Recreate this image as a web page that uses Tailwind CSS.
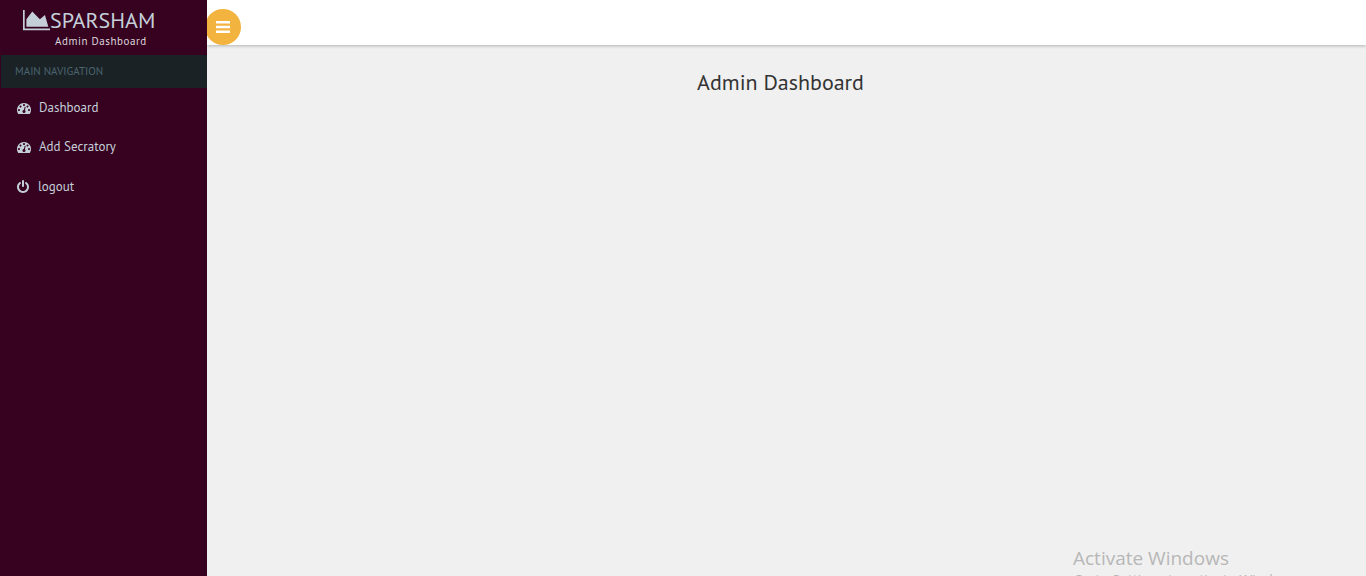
<!DOCTYPE html>
<html lang="en">
<head>
<meta charset="utf-8">
<meta name="viewport" content="width=device-width, initial-scale=1">
<title>Admin Dashboard</title>
<script src="https://cdn.jsdelivr.net/npm/@tailwindcss/browser@4"></script>
</head>
<body class="flex h-screen overflow-hidden bg-[#f0f0f0] font-['PT_Sans','Noto_Sans',sans-serif]">
<aside class="w-[207px] shrink-0 bg-[#360220] text-[#c5cfd8]">
  <a href="#" class="flex h-[55px] flex-col pt-2 pl-[23px]">
    <span class="flex h-6 items-center text-[22px] leading-[22px]">
      <svg class="h-6 w-[27px] shrink-0" viewBox="0 0 2048 1792" fill="currentColor" aria-hidden="true"><path d="M2048 1536v128h-2048v-1536h128v1408h1920zm-384-1024l256 896h-1664v-576l448-576 576 576z"/></svg>SPARSHAM</span>
    <span class="pl-8 text-[11px] leading-[18px] tracking-wider text-[#dcd5dc]">Admin Dashboard</span>
  </a>
  <h2 class="ml-px h-[33px] bg-[#1a2226] pl-[14px] text-[11px] leading-[33px] text-[#4b646f]">MAIN NAVIGATION</h2>
  <nav class="text-[13px]">
    <a href="#" class="flex h-[39px] items-center gap-2 pl-[17px]"><svg class="size-[14px]" viewBox="0 0 1792 1792" fill="currentColor" aria-hidden="true"><path id="gauge" d="M384 1152q0-53-37.5-90.5t-90.5-37.5-90.5 37.5-37.5 90.5 37.5 90.5 90.5 37.5 90.5-37.5 37.5-90.5zm192-448q0-53-37.5-90.5t-90.5-37.5-90.5 37.5-37.5 90.5 37.5 90.5 90.5 37.5 90.5-37.5 37.5-90.5zm428 481l101-382q6-26-7.5-48.5t-38.5-29.5-48 6.5-30 39.5l-101 382q-60 5-107 43.5t-63 98.5q-20 77 20 146t117 89 146-20 89-117q16-60-6-117t-72-91zm660-33q0-53-37.5-90.5t-90.5-37.5-90.5 37.5-37.5 90.5 37.5 90.5 90.5 37.5 90.5-37.5 37.5-90.5zm-640-640q0-53-37.5-90.5t-90.5-37.5-90.5 37.5-37.5 90.5 37.5 90.5 90.5 37.5 90.5-37.5 37.5-90.5zm448 192q0-53-37.5-90.5t-90.5-37.5-90.5 37.5-37.5 90.5 37.5 90.5 90.5 37.5 90.5-37.5 37.5-90.5zm320 448q0 261-141 483-19 29-54 29h-1402q-35 0-54-29-141-221-141-483 0-182 71-348t191-286 286-191 348-71 348 71 286 191 191 286 71 348z"/></svg>Dashboard</a>
    <a href="#" class="flex h-10 items-center gap-2 pl-[17px]"><svg class="size-[14px]" viewBox="0 0 1792 1792" fill="currentColor" aria-hidden="true"><use href="#gauge"/></svg>Add Secratory</a>
    <a href="#" class="flex h-[39px] items-center gap-2 pl-4"><svg class="size-[14px]" viewBox="0 0 1792 1792" fill="currentColor" aria-hidden="true"><path d="M1664 896q0 156-61 298t-164 245-245 164-298 61-298-61-245-164-164-245-61-298q0-182 80.5-343t226.5-270q43-32 95.5-25t83.5 50q32 42 24.5 94.5t-49.5 84.5q-98 74-151.5 181t-53.5 228q0 104 40.5 198.5t109.5 163.5 163.5 109.5 198.5 40.5 198.5-40.5 163.5-109.5 109.5-163.5 40.5-198.5q0-121-53.5-228t-151.5-181q-42-32-49.5-84.5t24.5-94.5q31-43 84-50t95 25q146 109 226.5 270t80.5 343zm-640-768v640q0 52-38 90t-90 38-90-38-38-90v-640q0-52 38-90t90-38 90 38 38 90z"/></svg>logout</a>
  </nav>
</aside>
<div class="flex min-w-0 flex-1 flex-col overflow-hidden">
  <header class="h-[45px] shrink-0 bg-white pt-[9px] shadow-[0_1px_3px_rgba(0,0,0,0.25)]">
    <button type="button" aria-label="Toggle navigation" class="-ml-0.5 flex size-9 items-center justify-center rounded-full bg-[#f2b33f] text-white">
      <svg class="h-3 w-[14px]" viewBox="0 0 14 12" fill="currentColor" aria-hidden="true"><path d="M0 0h14v2.6H0zM0 4.7h14v2.6H0zM0 9.4h14v2.6H0z"/></svg>
    </button>
  </header>
  <main class="flex-1 pt-[23px] pr-3">
    <h1 class="text-center text-[22px] leading-7 text-[#333]">Admin Dashboard</h1>
  </main>
</div>
<div class="pointer-events-none absolute top-[546px] left-[1073px] h-[30px] overflow-hidden font-['Segoe_UI','Open_Sans',sans-serif] whitespace-nowrap text-[#b7b7b7]">
  <p class="text-[19px] leading-6">Activate Windows</p>
  <p class="text-sm leading-5">Go to Settings to activate Windows.</p>
</div>
</body>
</html>
